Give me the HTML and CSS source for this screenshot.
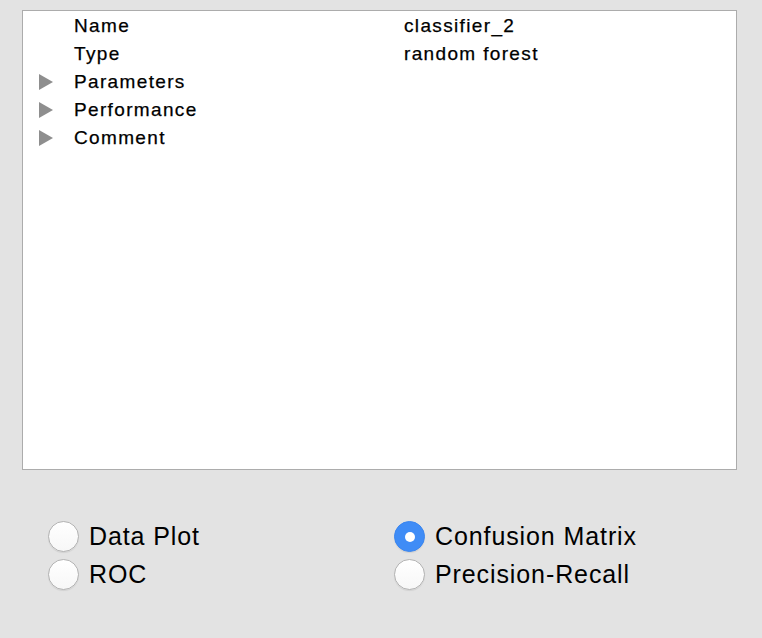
FILE: index.html
```html
<!DOCTYPE html>
<html>
<head>
<meta charset="utf-8">
<link rel="stylesheet" href="styles.css">
</head>
<body>
<div class="panel">
  <div class="row"><span class="arrow-slot"></span><span class="key">Name</span><span class="val">classifier_2</span></div>
  <div class="row"><span class="arrow-slot"></span><span class="key">Type</span><span class="val">random forest</span></div>
  <div class="row"><span class="arrow-slot"><span class="arrow"></span></span><span class="key">Parameters</span><span class="val"></span></div>
  <div class="row"><span class="arrow-slot"><span class="arrow"></span></span><span class="key">Performance</span><span class="val"></span></div>
  <div class="row"><span class="arrow-slot"><span class="arrow"></span></span><span class="key">Comment</span><span class="val"></span></div>
</div>
<div class="radios">
  <label class="radio"><span class="dot"></span><span class="label">Data Plot</span></label>
  <label class="radio"><span class="dot on"></span><span class="label">Confusion Matrix</span></label>
  <label class="radio"><span class="dot"></span><span class="label">ROC</span></label>
  <label class="radio"><span class="dot"></span><span class="label">Precision-Recall</span></label>
</div>
</body>
</html>
```
FILE: styles.css
```css
html, body {
  margin: 0;
  padding: 0;
  background: #e3e3e3;
}
body {
  width: 762px;
  height: 638px;
  overflow: hidden;
  font-family: "Liberation Sans", Arial, sans-serif;
  color: #000;
}
.panel {
  margin: 10px 0 0 22px;
  width: 713px;
  height: 457px;
  background: #fff;
  border: 1px solid #acacac;
  padding-top: 1px;
  box-sizing: content-box;
}
.row {
  display: flex;
  align-items: center;
  height: 28px;
  font-size: 19px;
  letter-spacing: 1.35px;
  -webkit-text-stroke: 0.25px #000;
}
.arrow-slot {
  width: 51px;
  box-sizing: border-box;
  padding-left: 16px;
  display: flex;
  align-items: center;
  flex: none;
}
.arrow {
  width: 0;
  height: 0;
  border-top: 8px solid transparent;
  border-bottom: 8px solid transparent;
  border-left: 14px solid #8e8e8e;
}
.key {
  width: 330px;
  flex: none;
}
.val {
  flex: 1;
}
.radios {
  display: grid;
  grid-template-columns: 346px 346px;
  row-gap: 7px;
  margin: 51px 0 0 48px;
}
.radio {
  display: flex;
  align-items: center;
  height: 31px;
  font-size: 25px;
  letter-spacing: 0.9px;
}
.dot {
  width: 29px;
  height: 29px;
  border-radius: 50%;
  border: 1px solid #b3b3b3;
  background: linear-gradient(#ffffff, #f7f7f7);
  box-shadow: 0 1px 1px rgba(0,0,0,0.08);
  margin-right: 10px;
  display: flex;
  align-items: center;
  justify-content: center;
  flex: none;
}
.dot.on {
  background: #3f8cf6;
  border-color: #3a86f0;
}
.dot.on::after {
  content: "";
  width: 10px;
  height: 10px;
  border-radius: 50%;
  background: #fff;
}
.label {
  line-height: 31px;
}
```
